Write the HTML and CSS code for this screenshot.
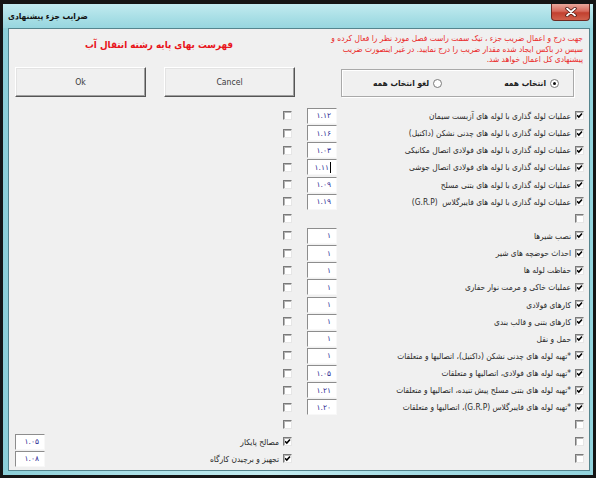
FILE: index.html
```html
<!DOCTYPE html>
<html lang="fa">
    <head>
        <meta charset="UTF-8">
        <title>ضرایب جزء پیشنهادی</title>
        <link rel="stylesheet" href="styles.css">
    </head>
    <body>
        <div class="window">
            <div class="window__frame">
                <header class="titlebar">
                    <span class="titlebar__title" dir="rtl">ضرایب جزء پیشنهادی</span>
                    <span class="titlebar__close" aria-label="close">
                        <svg width="12" height="10" viewBox="0 0 12 10"><path d="M2 1.5 L10 8.5 M10 1.5 L2 8.5" stroke="#4a1510" stroke-width="3.4" stroke-linecap="round"/><path d="M2 1.5 L10 8.5 M10 1.5 L2 8.5" stroke="#fff" stroke-width="1.8" stroke-linecap="round"/></svg>
                    </span>
                </header>
                <main class="client">
                    <div class="head">
                        <div class="head__side">
                            <h1 class="head__title" dir="rtl">فهرست بهای پایه رشته انتقال آب</h1>
                        </div>
                        <p class="head__note" dir="rtl">جهت درج و اعمال ضریب جزء ، تیک سمت راست فصل مورد نظر را فعال کرده و<br>سپس در باکس ایجاد شده مقدار ضریب را درج نمایید. در غیر اینصورت ضریب<br>پیشنهادی کل اعمال خواهد شد.</p>
                    </div>
                    <div class="controls">
                        <button class="button button--ok">Ok</button>
                        <button class="button button--cancel">Cancel</button>
                        <div class="choose" dir="rtl">
                            <span class="choose__item"><span class="radio radio--on"></span>انتخاب همه</span>
                            <span class="choose__item"><span class="radio"></span>لغو انتخاب همه</span>
                        </div>
                    </div>
                    <div class="rows">
                        <div class="row"><span></span><span></span><span class="check"></span><span class="box">۱.۱۲</span><span class="label" dir="rtl">عملیات لوله گذاری با لوله های آزبست سیمان</span><span class="check check--on"></span></div>
                        <div class="row"><span></span><span></span><span class="check"></span><span class="box">۱.۱۶</span><span class="label" dir="rtl">عملیات لوله گذاری با لوله های چدنی نشکن (داکتیل)</span><span class="check check--on"></span></div>
                        <div class="row"><span></span><span></span><span class="check"></span><span class="box">۱.۰۳</span><span class="label" dir="rtl">عملیات لوله گذاری با لوله های فولادی اتصال مکانیکی</span><span class="check check--on"></span></div>
                        <div class="row"><span></span><span></span><span class="check"></span><span class="box">۱.۱۱<i class="caret"></i></span><span class="label" dir="rtl">عملیات لوله گذاری با لوله های فولادی اتصال جوشی</span><span class="check check--on"></span></div>
                        <div class="row"><span></span><span></span><span class="check"></span><span class="box">۱.۰۹</span><span class="label" dir="rtl">عملیات لوله گذاری با لوله های بتنی مسلح</span><span class="check check--on"></span></div>
                        <div class="row"><span></span><span></span><span class="check"></span><span class="box">۱.۱۹</span><span class="label" dir="rtl">عملیات لوله گذاری با لوله های فایبرگلاس&nbsp; (G.R.P)</span><span class="check check--on"></span></div>
                        <div class="row"><span></span><span></span><span class="check"></span><span></span><span></span><span class="check"></span></div>
                        <div class="row"><span></span><span></span><span class="check"></span><span class="box">۱</span><span class="label" dir="rtl">نصب شیرها</span><span class="check check--on"></span></div>
                        <div class="row"><span></span><span></span><span class="check"></span><span class="box">۱</span><span class="label" dir="rtl">احداث حوضچه های شیر</span><span class="check check--on"></span></div>
                        <div class="row"><span></span><span></span><span class="check"></span><span class="box">۱</span><span class="label" dir="rtl">حفاظت لوله ها</span><span class="check check--on"></span></div>
                        <div class="row"><span></span><span></span><span class="check"></span><span class="box">۱</span><span class="label" dir="rtl">عملیات خاکی و مرمت نوار حفاری</span><span class="check check--on"></span></div>
                        <div class="row"><span></span><span></span><span class="check"></span><span class="box">۱</span><span class="label" dir="rtl">کارهای فولادی</span><span class="check check--on"></span></div>
                        <div class="row"><span></span><span></span><span class="check"></span><span class="box">۱</span><span class="label" dir="rtl">کارهای بتنی و قالب بندی</span><span class="check check--on"></span></div>
                        <div class="row"><span></span><span></span><span class="check"></span><span class="box">۱</span><span class="label" dir="rtl">حمل و نقل</span><span class="check check--on"></span></div>
                        <div class="row"><span></span><span></span><span class="check"></span><span class="box">۱</span><span class="label" dir="rtl">*تهیه لوله های چدنی نشکن (داکتیل)، اتصالیها و متعلقات</span><span class="check check--on"></span></div>
                        <div class="row"><span></span><span></span><span class="check"></span><span class="box">۱.۰۵</span><span class="label" dir="rtl">*تهیه لوله های فولادی، اتصالیها و متعلقات</span><span class="check check--on"></span></div>
                        <div class="row"><span></span><span></span><span class="check"></span><span class="box">۱.۲۱</span><span class="label" dir="rtl">*تهیه لوله های بتنی مسلح پیش تنیده، اتصالیها و متعلقات</span><span class="check check--on"></span></div>
                        <div class="row"><span></span><span></span><span class="check"></span><span class="box">۱.۲۰</span><span class="label" dir="rtl">*تهیه لوله های فایبرگلاس (G.R.P)، اتصالیها و متعلقات</span><span class="check check--on"></span></div>
                        <div class="row"><span></span><span></span><span class="check"></span><span></span><span></span><span class="check"></span></div>
                        <div class="row"><span class="box">۱.۰۵</span><span class="label" dir="rtl">مصالح پایکار</span><span class="check check--on"></span><span></span><span></span><span class="check"></span></div>
                        <div class="row"><span class="box">۱.۰۸</span><span class="label" dir="rtl">تجهیز و برچیدن کارگاه</span><span class="check check--on"></span><span></span><span></span><span class="check"></span></div>
                    </div>
                </main>
            </div>
        </div>
    </body>
</html>
```

FILE: styles.css
```css
* {
    box-sizing: border-box;
}

body {
    margin: 0;
    background-color: #fff;
    font-family: "DejaVu Sans Condensed", "DejaVu Sans", sans-serif;
    font-size: 8px;
    color: #222;
}

.window {
    width: 596px;
    height: 478px;
    padding: 4px 3px 3px 3px;
    background-color: #151515;
}

.window__frame {
    height: 100%;
    display: flex;
    flex-direction: column;
    padding: 0 3px 4px 5px;
    background: linear-gradient(90deg, #8ccfd8 0%, #a9dfe6 20%, #c3ebef 45%, #a4dce4 70%, #93d4dd 100%);
}

.titlebar {
    height: 24px;
    display: flex;
    justify-content: space-between;
    align-items: flex-start;
    background: linear-gradient(180deg, #c2ebf0 0%, #a9dfe6 55%, #97d6df 100%);
    margin: 0 -3px 0 -5px;
    padding: 0 3px 0 5px;
}

.titlebar__title {
    padding-top: 7px;
    font-weight: bold;
    font-size: 8.4px;
    color: #111;
}

.titlebar__close {
    width: 39px;
    height: 17px;
    display: flex;
    align-items: center;
    justify-content: center;
    border: 1px solid #6e2a22;
    border-top: none;
    border-radius: 0 0 4px 4px;
    background: linear-gradient(180deg, #e9a89c 0%, #d76a5c 45%, #c2402f 55%, #d0604c 100%);
}

.client {
    flex: 1;
    border: 1px solid #55858e;
    background-color: #f0f0f0;
}

.head {
    height: 38px;
    display: flex;
    justify-content: space-between;
}

.head__side {
    width: 300px;
    padding-top: 9px;
    text-align: center;
}

.head__title {
    margin: 0;
    font-size: 9.8px;
    line-height: 14px;
    font-weight: bold;
    color: #e8141b;
}

.head__note {
    margin: 0;
    padding: 4px 6px 0 0;
    white-space: nowrap;
    font-size: 8.3px;
    line-height: 10.5px;
    color: #ea2a2a;
    text-align: right;
}

.controls {
    height: 30px;
    display: flex;
    align-items: flex-end;
    padding-left: 6px;
}

.button {
    width: 131px;
    height: 30px;
    margin: 0 18px 0 0;
    padding: 0;
    border: 1px solid;
    border-color: #fff #555 #555 #fff;
    box-shadow: inset -1px -1px #a0a0a0, inset 1px 1px #e3e3e3;
    background-color: #f0f0f0;
    font-family: "DejaVu Sans Condensed", "DejaVu Sans", sans-serif;
    font-size: 8.6px;
    color: #3a3a3a;
}

.button--cancel {
    margin-right: 0;
}

.choose {
    width: 233px;
    height: 28px;
    margin-left: 46px;
    display: flex;
    align-items: center;
    gap: 62px;
    padding-right: 14px;
    border: 1px solid #a9a9a9;
    box-shadow: inset 1px 1px #fff, 1px 1px #fff;
    font-weight: bold;
    font-size: 8.4px;
    color: #222;
}

.choose__item {
    display: flex;
    align-items: center;
    gap: 4px;
}

.radio {
    width: 9px;
    height: 9px;
    border-radius: 50%;
    border: 1px solid #7a7a7a;
    background-color: #fff;
    display: flex;
    align-items: center;
    justify-content: center;
}

.radio--on::after {
    content: "";
    width: 3px;
    height: 3px;
    border-radius: 50%;
    background-color: #111;
}

.rows {
    margin-top: 10.4px;
    padding-left: 6px;
    display: grid;
    grid-template-columns: 30px 238px 9px 45px 238px 9px;
    grid-auto-rows: 17.15px;
    align-items: center;
}

.row {
    display: contents;
}

.box {
    width: 30px;
    height: 16px;
    justify-self: end;
    display: flex;
    align-items: center;
    justify-content: flex-end;
    padding-right: 5px;
    border: 1px solid;
    border-color: #8d8d8d #f8f8f8 #f8f8f8 #8d8d8d;
    background-color: #fff;
    font-family: "DejaVu Sans", sans-serif;
    font-size: 7.5px;
    color: #2b2b95;
}

.caret {
    width: 1px;
    height: 11px;
    margin-left: 1px;
    background-color: #000;
}

.label {
    padding-right: 4px;
    text-align: right;
    white-space: nowrap;
    font-size: 8.3px;
    color: #2a2a2a;
}

.check {
    width: 9px;
    height: 9px;
    border: 1px solid;
    border-color: #7a7a7a #e6e6e6 #e6e6e6 #7a7a7a;
    box-shadow: inset 1px 1px #b5b5b5;
    background-color: #fff;
}

.check--on {
    background: #fff url("data:image/svg+xml;utf8,<svg xmlns='http://www.w3.org/2000/svg' width='7' height='7'><path d='M1 3.2 L2.8 5 L6 1.5' fill='none' stroke='black' stroke-width='1.6'/></svg>") center / 7px 7px no-repeat;
}
```
